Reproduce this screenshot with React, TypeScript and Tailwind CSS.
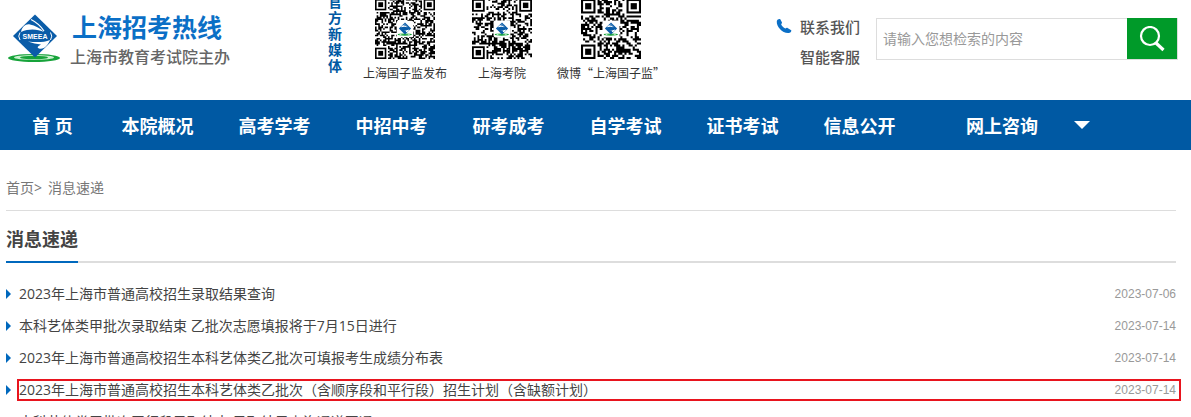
import type { ReactNode } from "react";

const NAV = ["本院概况", "高考学考", "中招中考", "研考成考", "自学考试", "证书考试", "信息公开"];

const NEWS = [
  { title: "2023年上海市普通高校招生录取结果查询", date: "2023-07-06" },
  { title: "本科艺体类甲批次录取结束 乙批次志愿填报将于7月15日进行", date: "2023-07-14" },
  { title: "2023年上海市普通高校招生本科艺体类乙批次可填报考生成绩分布表", date: "2023-07-14" },
  { title: "2023年上海市普通高校招生本科艺体类乙批次（含顺序段和平行段）招生计划（含缺额计划）", date: "2023-07-14", marked: true },
  { title: "本科艺体类甲批次平行段录取结束 录取结果查询通道开通", date: "2023-07-14" },
];

const CODES = [
  { label: "上海国子监发布", size: 37, seed: 11 },
  { label: "上海考院", size: 33, seed: 47 },
  { label: "微博“上海国子监”", size: 29, seed: 83 },
];

function Emblem() {
  return (
    <>
      <ellipse cx="26" cy="44" rx="26" ry="4" fill="#17a33a" />
      <ellipse cx="26" cy="43.5" rx="20" ry="2.4" fill="#c9f0cf" />
      <ellipse cx="26" cy="43.5" rx="14" ry="1.8" fill="#17a33a" />
      <path d="M27 .5 49 22 27 43.5 5 22Z" fill="#0a5ca8" />
      <path d="M13 18C14 12.500 18 9.500 22 10.500 27 11.500 32 14 36 18 30 15.500 22 14 13 18Z" fill="#fff" />
      <path d="M23 5.500 Q31 9.500 36 17" stroke="#fff" strokeWidth="1.2" fill="none" />
      <path d="M42 26C40 31 36 36 31 34.500 28 33 31 32 33 30.500 29 30 24 29 20 27.500 28 28.500 36 28.500 42 26Z" fill="#fff" />
    </>
  );
}

function Logo() {
  return (
    <svg viewBox="0 0 54 48" className="h-12 w-[54px] shrink-0" aria-hidden>
      <Emblem />
      <rect x="11" y="18.5" width="32" height="7" rx="3.5" fill="#0a5ca8" />
      <text x="27" y="25" textAnchor="middle" fontSize="7" fontWeight="700" fontFamily="Liberation Sans, sans-serif" fill="#fff">
        SMEEA
      </text>
      <path d="M12 18.500Q9.500 22 12 26M42.500 18.500Q45 22 42.500 26" stroke="#fff" fill="none" />
    </svg>
  );
}

function buildModules(size: number, seed: number) {
  let state = seed;
  let path = "";
  const inFinder = (x: number, y: number) =>
    (x < 8 && y < 8) || (x > size - 9 && y < 8) || (x < 8 && y > size - 9);
  for (let y = 0; y < size; y++) {
    for (let x = 0; x < size; x++) {
      state = (state * 1103515245 + 12345) % 2147483648;
      if (!inFinder(x, y) && state / 2147483648 > 0.48) path += `M${x} ${y}h1v1h-1z`;
    }
  }
  return path;
}

function QrCode({ size, seed, label }: { size: number; seed: number; label: string }) {
  const corners = [[0, 0], [size - 7, 0], [0, size - 7]];
  const mark = size / 4;
  return (
    <svg viewBox={`0 0 ${size} ${size}`} className="size-[60px]" role="img" aria-label={label}>
      <path d={buildModules(size, seed)} fill="#000" />
      {corners.map(([x, y]) => (
        <g key={`${x}-${y}`}>
          <rect x={x + 0.5} y={y + 0.5} width="6" height="6" fill="#fff" stroke="#000" />
          <rect x={x + 2} y={y + 2} width="3" height="3" />
        </g>
      ))}
      <rect x={(size - mark) / 2 - 0.5} y={(size - mark) / 2 - 0.5} width={mark + 1} height={mark + 1} rx="1" fill="#fff" />
      <svg x={(size - mark) / 2} y={(size - mark) / 2} width={mark} height={mark} viewBox="0 0 54 48">
        <Emblem />
      </svg>
    </svg>
  );
}

function NavItem({ children, className }: { children: ReactNode; className: string }) {
  return (
    <li className={`shrink-0 text-center ${className}`}>
      <a href="#" className="block pt-0.5 leading-12">{children}</a>
    </li>
  );
}

function Header() {
  return (
    <header className="flex h-[100px] items-start overflow-hidden">
      <a href="#" className="flex w-[328px] shrink-0 gap-2 pt-3.5 pl-2">
        <Logo />
        <span className="-mt-0.5 whitespace-nowrap">
          <span className="block pl-0.5 text-[25px] leading-[30px] font-bold text-[#0b6fc6]">上海招考热线</span>
          <span className="block text-base leading-[30px] font-medium text-[#666]">上海市教育考试院主办</span>
        </span>
      </a>
      <p className="-mt-1.5 w-3.5 shrink-0 text-sm leading-4 font-bold text-[#0059a3]">官方新媒体</p>
      <ul className="-mt-px ml-[21px] flex shrink-0 gap-[25px]">
        {CODES.map((c) => (
          <li key={c.label} className="flex flex-col items-center">
            <QrCode {...c} />
            <span className="mt-[5px] font-['Noto_Sans_CJK_SC',sans-serif] text-xs leading-[18px] whitespace-nowrap text-[#333]">{c.label}</span>
          </li>
        ))}
      </ul>
      <div className="mr-4 ml-auto flex shrink-0 gap-2 pt-3 text-[15px] leading-[30px] font-medium text-[#555]">
        <svg viewBox="0 0 16 16" className="mt-1.5 size-4" aria-hidden>
          <path d="M.8 3C1.200 1.500 3 .6 4.300 1.200L6 4.600C6.200 5.500 5.200 6 5.200 6.600 6 8.300 7.500 9.800 9.300 10.600 10 10.700 10.700 9.700 11.500 9.900L15.300 12.200C15.600 13.600 14.200 14.900 12.600 15 6.500 15.400 .2 8.800 .8 3Z" fill="#0b6fc6" />
        </svg>
        <div>
          <a href="#" className="block">联系我们</a>
          <a href="#" className="block">智能客服</a>
        </div>
      </div>
      <form className="mt-[18px] mr-[13px] flex h-[42px] w-[302px] shrink-0 border border-[#ddd]">
        <input
          type="text"
          aria-label="检索内容"
          placeholder="请输入您想检索的内容"
          className="min-w-0 flex-1 px-1.5 text-sm outline-none placeholder:text-[#999]"
        />
        <button type="button" aria-label="搜索" className="-mt-px flex w-[50px] items-center justify-center bg-[#009a29]">
          <svg viewBox="0 0 26 26" className="size-[26px]" fill="none" stroke="#fff" aria-hidden>
            <circle cx="11" cy="10" r="9" strokeWidth="2.2" />
            <path d="M17 17 24.500 24" strokeWidth="3.200" />
          </svg>
        </button>
      </form>
    </header>
  );
}

export default function App() {
  return (
    <div className="overflow-hidden bg-white font-['Open_Sans','Noto_Sans_CJK_SC',sans-serif] text-sm text-[#444]">
      <Header />
      <nav className="bg-[#0059a3] text-lg font-bold text-white">
        <ul className="flex whitespace-nowrap">
          <NavItem className="w-[99px] pl-1.5">首 页</NavItem>
          {NAV.map((name) => (
            <NavItem key={name} className="w-[117px]">{name}</NavItem>
          ))}
          <NavItem className="w-[156px] pl-3">网上咨询</NavItem>
          <li className="flex items-center">
            <button type="button" aria-label="更多">
              <svg viewBox="0 0 16 8" className="h-2 w-4" aria-hidden>
                <path d="M0 0H16L8 8Z" fill="#fff" />
              </svg>
            </button>
          </li>
        </ul>
      </nav>
      <main className="pr-[15px] pl-1.5">
        <div className="flex gap-1.5 border-b border-[#ddd] pt-[27px] pb-[11px] leading-[22px] text-[#777]">
          <span><a href="#">首页</a>&gt;</span>
          <a href="#">消息速递</a>
        </div>
        <div className="flex border-b-2 border-[#ddd]">
          <h1 className="-mb-0.5 border-b-2 border-[#0068bd] pt-3 pb-[6px] text-lg leading-8 font-bold">消息速递</h1>
        </div>
        <ul className="pt-[15px]">
          {NEWS.map((n) => (
            <li key={n.title} className="relative flex h-8 items-center">
              <svg viewBox="0 0 5 10" className="mr-2 h-2.5 w-[5px] shrink-0" aria-hidden>
                <path d="M0 0 5 5 0 10Z" fill="#0068bd" />
              </svg>
              <a href="#" className="whitespace-nowrap">{n.title}</a>
              <time className="ml-auto font-['Liberation_Sans',sans-serif] text-xs text-[#999]">{n.date}</time>
              {n.marked && <span className="pointer-events-none absolute inset-y-[5px] -right-[5px] left-[11px] border-2 border-[#e8141e]" />}
            </li>
          ))}
        </ul>
      </main>
    </div>
  );
}
